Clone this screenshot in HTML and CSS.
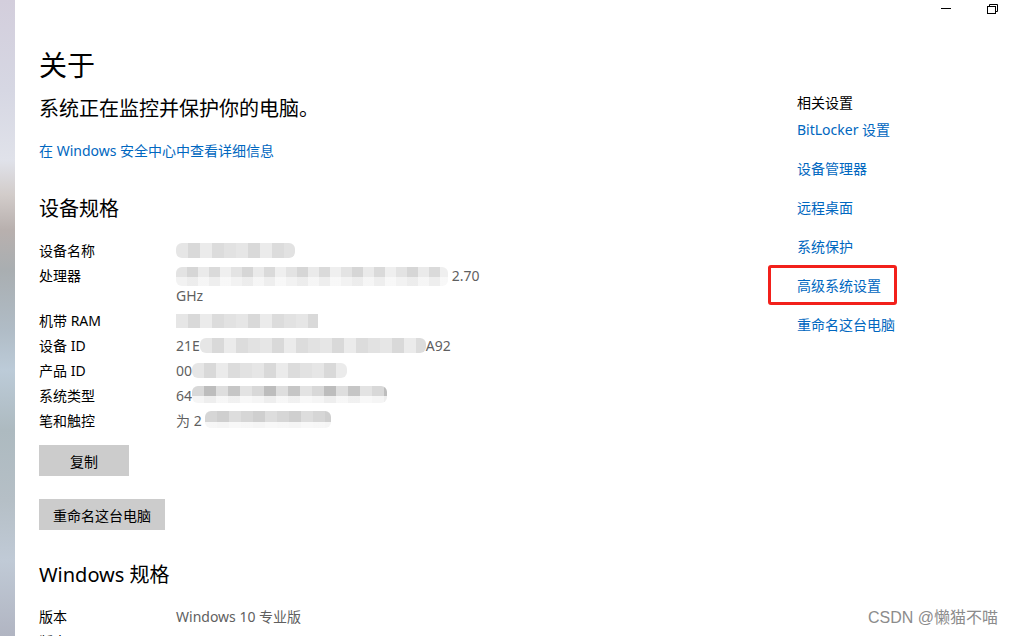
FILE: index.html
```html
<!DOCTYPE html>
<html lang="zh-CN">
<head>
<meta charset="utf-8">
<title>关于</title>
<link rel="stylesheet" href="styles.css">
</head>
<body>
<div class="desktop-strip"></div>
<div class="window">
  <div class="titlebar">
    <button class="ctl ctl-min" aria-label="最小化"><span class="min-line"></span></button>
    <button class="ctl ctl-restore" aria-label="还原">
      <svg width="11" height="10" viewBox="0 0 11 10"><path d="M2.5 2.5V0.5H10.5V7.5H8.5" fill="none" stroke="#000" stroke-width="1"/><rect x="0.5" y="2.5" width="8" height="7" fill="#fff" stroke="#000" stroke-width="1"/></svg>
    </button>
  </div>
  <div class="content">
    <main class="main-col">
      <h1 class="page-title">关于</h1>
      <p class="status">系统正在监控并保护你的电脑。</p>
      <a class="link" href="#">在 Windows 安全中心中查看详细信息</a>

      <h2 class="section-title first">设备规格</h2>
      <dl class="specs">
        <div class="row"><dt>设备名称</dt><dd><span class="blur b-name"></span></dd></div>
        <div class="row"><dt>处理器</dt><dd><span class="blur b-cpu"></span> 2.70 GHz</dd></div>
        <div class="row"><dt>机带 RAM</dt><dd><span class="blur b-ram"></span></dd></div>
        <div class="row"><dt>设备 ID</dt><dd>21E<span class="blur b-id"></span>A92</dd></div>
        <div class="row"><dt>产品 ID</dt><dd>00<span class="blur b-pid"></span></dd></div>
        <div class="row"><dt>系统类型</dt><dd>64<span class="blur b-type"></span></dd></div>
        <div class="row"><dt>笔和触控</dt><dd>为 2 <span class="blur b-pen"></span></dd></div>
      </dl>
      <button class="btn btn-copy">复制</button>
      <button class="btn btn-rename">重命名这台电脑</button>

      <h2 class="section-title second">Windows 规格</h2>
      <dl class="specs">
        <div class="row"><dt>版本</dt><dd>Windows 10 专业版</dd></div>
        <div class="row"><dt>版本号</dt><dd>21H2</dd></div>
      </dl>
    </main>
    <aside class="side-col">
      <h3 class="side-title">相关设置</h3>
      <ul class="side-links">
        <li><a class="link" href="#">BitLocker 设置</a></li>
        <li><a class="link" href="#">设备管理器</a></li>
        <li><a class="link" href="#">远程桌面</a></li>
        <li><a class="link" href="#">系统保护</a></li>
        <li><a class="link marked" href="#">高级系统设置</a></li>
        <li><a class="link" href="#">重命名这台电脑</a></li>
      </ul>
    </aside>
  </div>
  <div class="watermark">CSDN @懒猫不喵</div>
</div>
</body>
</html>
```

FILE: styles.css
```css
* { box-sizing: border-box; }
html, body { margin: 0; padding: 0; height: 100%; }
body {
  display: flex;
  width: 1012px;
  height: 636px;
  overflow: hidden;
  background: #fff;
  font-family: "Noto Sans", "Noto Sans CJK SC", sans-serif;
  color: #000;
}
.desktop-strip {
  width: 15px;
  flex: 0 0 15px;
  background: linear-gradient(180deg,
    #d3cedc 0px, #d6d7e3 90px, #e0e2ea 160px, #d2ccca 195px,
    #b8b0ae 230px, #a9aeb1 270px, #b0bcc6 330px, #bccbd8 370px,
    #adbac0 430px, #b5bfc6 500px, #c0cad6 560px, #b1b5c2 636px);
}
.window {
  flex: 1;
  position: relative;
  overflow: hidden;
  display: flex;
  flex-direction: column;
}
.titlebar {
  display: flex;
  justify-content: flex-end;
  height: 16px;
  margin-right: -3px;
}
.ctl {
  width: 46px;
  height: 16px;
  border: 0;
  background: transparent;
  padding: 0;
  display: flex;
  align-items: center;
  justify-content: center;
}
.min-line { display: block; width: 10px; height: 1px; background: #000; margin-top: 1px; }
.ctl-restore svg { display: block; margin-top: 1px; }

.content {
  display: flex;
  padding-left: 24px;
}
.main-col { flex: 0 0 758px; }
.side-col { flex: 1; padding-top: 77px; }

.page-title {
  margin: 29px 0 0;
  font-size: 28px;
  line-height: 40px;
  font-weight: 400;
}
.status {
  margin: 10px 0 0;
  font-size: 20px;
  line-height: 28px;
}
.link {
  color: #0067c0;
  text-decoration: none;
  font-size: 14px;
  line-height: 19px;
  display: inline-block;
}
.main-col > .link { margin-top: 18px; line-height: 20px; }
.section-title {
  margin: 0;
  font-size: 20px;
  line-height: 28px;
  font-weight: 400;
}
.section-title.first { margin-top: 34px; }
.section-title.second { margin-top: 31px; }

.specs { margin: 18px 0 0; }
.row {
  display: flex;
  font-size: 14px;
  line-height: 19px;
  margin-bottom: 6px;
}
.row dt { width: 137px; flex: 0 0 137px; }
.row dd { margin: 0; color: #5f5f5f; width: 310px; }

.blur {
  display: inline-block;
  height: 15px;
  vertical-align: -2px;
  border-radius: 6px;
  background:
    repeating-linear-gradient(90deg, #e6e6e6 0 12px, #d9d9d9 12px 24px, #ebebeb 24px 36px, #dcdcdc 36px 48px, #e2e2e2 48px 60px);
}
.b-name { width: 119px; }
.b-cpu {
  width: 272px;
  height: 19px;
  vertical-align: -5px;
  background:
    linear-gradient(180deg, rgba(255,255,255,0) 0 55%, rgba(255,255,255,0.55) 55% 100%),
    repeating-linear-gradient(90deg, #e3e3e3 0 11px, #d6d6d6 11px 22px, #eaeaea 22px 33px, #dadada 33px 44px, #efefef 44px 55px);
}
.b-ram { width: 142px; height: 14px; border-radius: 0; }
.b-id { width: 226px; }
.b-pid { width: 155px; }
.b-type {
  width: 195px;
  height: 17px;
  background:
    linear-gradient(180deg, rgba(255,255,255,0) 0 60%, rgba(255,255,255,0.75) 60% 100%),
    repeating-linear-gradient(90deg, #d8d8d8 0 12px, #bdbdbd 12px 24px, #dedede 24px 36px, #c6c6c6 36px 48px, #e3e3e3 48px 60px);
}
.b-pen {
  width: 126px;
  height: 17px;
  background:
    linear-gradient(180deg, rgba(255,255,255,0) 0 62%, rgba(255,255,255,0.8) 62% 100%),
    repeating-linear-gradient(90deg, #d6d6d6 0 12px, #cfcfcf 12px 24px, #dddddd 24px 36px);
}

.btn {
  display: block;
  height: 31px;
  min-width: 90px;
  padding: 0 14px;
  border: 0;
  background: #cccccc;
  font-family: inherit;
  font-size: 14px;
  color: #000;
}
.btn-copy { margin-top: 15px; }
.btn-rename { margin-top: 23px; }

.side-title {
  margin: 0;
  font-size: 14px;
  line-height: 19px;
  font-weight: 400;
}
.side-links {
  list-style: none;
  margin: 6px 0 0;
  padding: 0;
}
.side-links li { height: 19px; margin-bottom: 20px; }
.marked { position: relative; }
.marked::after {
  content: "";
  position: absolute;
  top: -11px;
  bottom: -10px;
  left: -29px;
  right: -16px;
  border: 3px solid #f2201b;
  border-radius: 3px;
}

.watermark {
  position: absolute;
  right: 14px;
  bottom: 8px;
  font-size: 16px;
  color: #8c8c8c;
  font-family: "Liberation Sans", "Noto Sans CJK SC", sans-serif;
}
```
